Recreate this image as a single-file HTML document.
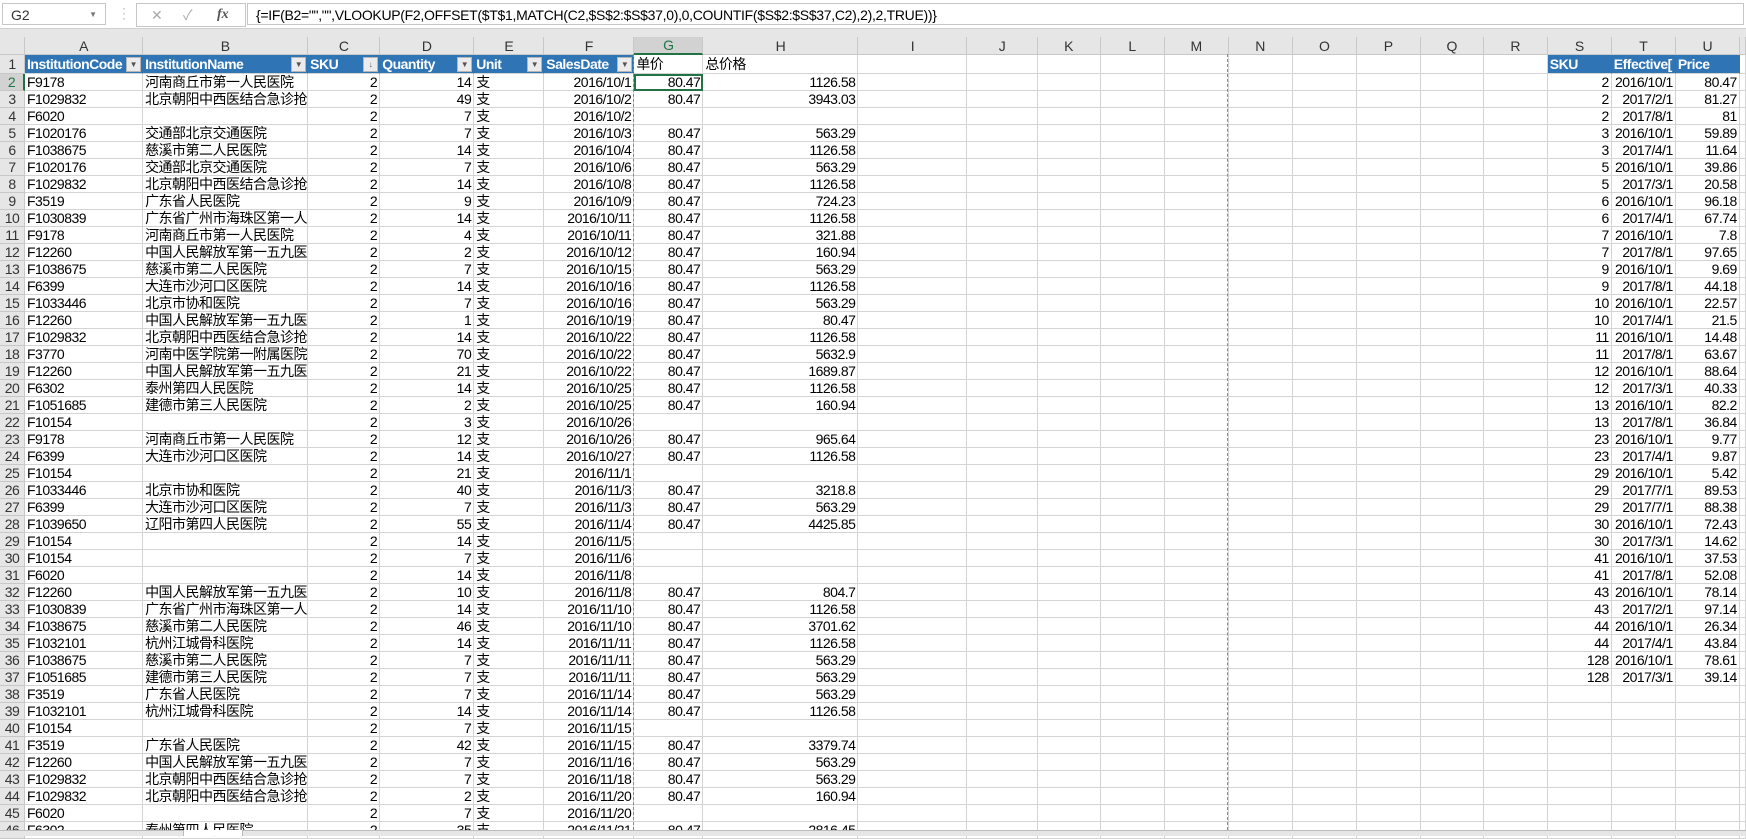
<!DOCTYPE html><html><head><meta charset="utf-8"><style>
body{margin:0;width:1746px;height:835px;overflow:hidden;background:#fff;position:relative;font-family:"Liberation Sans","Noto Sans CJK SC",sans-serif;}
#fb{position:absolute;left:0;top:0;width:1746px;height:28px;background:#fff;border-bottom:1px solid #d0d0d0;}
#gap{position:absolute;left:0;top:29px;width:1746px;height:8px;background:#e6e6e6;}
.box{position:absolute;top:3px;height:22px;border:1px solid #c6c6c6;background:#fff;font-size:14px;line-height:22px;color:#333;}
table{position:absolute;left:0;top:37px;border-collapse:separate;border-spacing:0;table-layout:fixed;width:1746px;font-size:14px;letter-spacing:-0.5px;}
td,th{padding:0 2px;height:16px;line-height:16px;border-right:1px solid #d4d4d4;border-bottom:1px solid #d4d4d4;white-space:nowrap;overflow:hidden;font-weight:normal;color:#000;box-sizing:border-box;}
th{background:#e6e6e6;color:#333;text-align:center;border-color:#c8c8c8;padding:0;}
tbody th{text-align:center;}
tr{height:17px}
tr.h{height:16px}
tr.one{height:19px}
.r{text-align:right}
.b{background:#2f75b5;color:#fff;font-weight:bold;position:relative;border-right-color:#2f75b5;}
.b i{position:absolute;right:1px;top:2px;width:15px;height:15px;background:#ececec;border:1px solid #b5b5b5;box-sizing:border-box;font-style:normal;color:#555;font-size:8px;line-height:13px;text-align:center;letter-spacing:0}
.dash{position:absolute;width:0;border-left:1px dashed #8a8a8a;top:54px;height:776px}
#tabs{position:absolute;left:0;top:830px;width:1746px;height:5px;background:#e6e6e6;border-top:1px solid #bbb}
</style></head><body>
<div id="fb">
<div class="box" style="left:2px;width:104px;padding-left:8px;box-sizing:border-box">G2<span style="position:absolute;right:8px;top:0;font-size:8px;color:#777">▼</span></div>
<div style="position:absolute;left:122px;top:6px;color:#aaa;font-size:12px;line-height:5px">·<br>·<br>·</div>
<div class="box" style="left:136px;width:108px;color:#aaa"><span style="position:absolute;left:14px">✕</span><span style="position:absolute;left:46px">✓</span><span style="position:absolute;left:80px;color:#555;font-style:italic;font-family:'Liberation Serif',serif;font-weight:bold">fx</span></div>
<div class="box" style="left:247px;width:1497px;padding-left:8px;box-sizing:border-box;color:#000;letter-spacing:-0.3px">{=IF(B2="","",VLOOKUP(F2,OFFSET($T$1,MATCH(C2,$S$2:$S$37,0),0,COUNTIF($S$2:$S$37,C2),2),2,TRUE))}</div>
</div>
<div id="gap"></div>
<table>
<colgroup><col style="width:25px"><col style="width:118px"><col style="width:165px"><col style="width:72px"><col style="width:94px"><col style="width:70px"><col style="width:90px"><col style="width:69px"><col style="width:155px"><col style="width:109px"><col style="width:70px"><col style="width:63px"><col style="width:64px"><col style="width:64px"><col style="width:64px"><col style="width:64px"><col style="width:64px"><col style="width:63px"><col style="width:64px"><col style="width:64px"><col style="width:64px"><col style="width:64px"><col style="width:6px"></colgroup>
<thead><tr class="h"><th></th><th>A</th><th>B</th><th>C</th><th>D</th><th>E</th><th>F</th><th style="background:#d2d2d2;color:#217346;border-bottom:2px solid #217346">G</th><th>H</th><th>I</th><th>J</th><th>K</th><th>L</th><th>M</th><th>N</th><th>O</th><th>P</th><th>Q</th><th>R</th><th>S</th><th>T</th><th>U</th><th></th></tr></thead>
<tbody>
<tr class="one"><th>1</th><td class="b">InstitutionCode<i>▼</i></td><td class="b">InstitutionName<i>▼</i></td><td class="b">SKU<i>↓</i></td><td class="b">Quantity<i>▼</i></td><td class="b">Unit<i>▼</i></td><td class="b">SalesDate<i>▼</i></td><td>单价</td><td>总价格</td><td></td><td></td><td></td><td></td><td></td><td></td><td></td><td></td><td></td><td></td><td class="b">SKU</td><td class="b">Effective[</td><td class="b">Price</td><td></td></tr>
<tr><th style="background:#d2d2d2;color:#217346;border-right:2px solid #217346">2</th><td>F9178</td><td>河南商丘市第一人民医院</td><td class="r">2</td><td class="r">14</td><td>支</td><td class="r">2016/10/1</td><td class="r" style="outline:2px solid #217346;outline-offset:-2px">80.47</td><td class="r">1126.58</td><td></td><td></td><td></td><td></td><td></td><td></td><td></td><td></td><td></td><td></td><td class="r">2</td><td class="r">2016/10/1</td><td class="r">80.47</td><td></td></tr>
<tr><th>3</th><td>F1029832</td><td>北京朝阳中西医结合急诊抢救</td><td class="r">2</td><td class="r">49</td><td>支</td><td class="r">2016/10/2</td><td class="r">80.47</td><td class="r">3943.03</td><td></td><td></td><td></td><td></td><td></td><td></td><td></td><td></td><td></td><td></td><td class="r">2</td><td class="r">2017/2/1</td><td class="r">81.27</td><td></td></tr>
<tr><th>4</th><td>F6020</td><td></td><td class="r">2</td><td class="r">7</td><td>支</td><td class="r">2016/10/2</td><td></td><td></td><td></td><td></td><td></td><td></td><td></td><td></td><td></td><td></td><td></td><td></td><td class="r">2</td><td class="r">2017/8/1</td><td class="r">81</td><td></td></tr>
<tr><th>5</th><td>F1020176</td><td>交通部北京交通医院</td><td class="r">2</td><td class="r">7</td><td>支</td><td class="r">2016/10/3</td><td class="r">80.47</td><td class="r">563.29</td><td></td><td></td><td></td><td></td><td></td><td></td><td></td><td></td><td></td><td></td><td class="r">3</td><td class="r">2016/10/1</td><td class="r">59.89</td><td></td></tr>
<tr><th>6</th><td>F1038675</td><td>慈溪市第二人民医院</td><td class="r">2</td><td class="r">14</td><td>支</td><td class="r">2016/10/4</td><td class="r">80.47</td><td class="r">1126.58</td><td></td><td></td><td></td><td></td><td></td><td></td><td></td><td></td><td></td><td></td><td class="r">3</td><td class="r">2017/4/1</td><td class="r">11.64</td><td></td></tr>
<tr><th>7</th><td>F1020176</td><td>交通部北京交通医院</td><td class="r">2</td><td class="r">7</td><td>支</td><td class="r">2016/10/6</td><td class="r">80.47</td><td class="r">563.29</td><td></td><td></td><td></td><td></td><td></td><td></td><td></td><td></td><td></td><td></td><td class="r">5</td><td class="r">2016/10/1</td><td class="r">39.86</td><td></td></tr>
<tr><th>8</th><td>F1029832</td><td>北京朝阳中西医结合急诊抢救</td><td class="r">2</td><td class="r">14</td><td>支</td><td class="r">2016/10/8</td><td class="r">80.47</td><td class="r">1126.58</td><td></td><td></td><td></td><td></td><td></td><td></td><td></td><td></td><td></td><td></td><td class="r">5</td><td class="r">2017/3/1</td><td class="r">20.58</td><td></td></tr>
<tr><th>9</th><td>F3519</td><td>广东省人民医院</td><td class="r">2</td><td class="r">9</td><td>支</td><td class="r">2016/10/9</td><td class="r">80.47</td><td class="r">724.23</td><td></td><td></td><td></td><td></td><td></td><td></td><td></td><td></td><td></td><td></td><td class="r">6</td><td class="r">2016/10/1</td><td class="r">96.18</td><td></td></tr>
<tr><th>10</th><td>F1030839</td><td>广东省广州市海珠区第一人民</td><td class="r">2</td><td class="r">14</td><td>支</td><td class="r">2016/10/11</td><td class="r">80.47</td><td class="r">1126.58</td><td></td><td></td><td></td><td></td><td></td><td></td><td></td><td></td><td></td><td></td><td class="r">6</td><td class="r">2017/4/1</td><td class="r">67.74</td><td></td></tr>
<tr><th>11</th><td>F9178</td><td>河南商丘市第一人民医院</td><td class="r">2</td><td class="r">4</td><td>支</td><td class="r">2016/10/11</td><td class="r">80.47</td><td class="r">321.88</td><td></td><td></td><td></td><td></td><td></td><td></td><td></td><td></td><td></td><td></td><td class="r">7</td><td class="r">2016/10/1</td><td class="r">7.8</td><td></td></tr>
<tr><th>12</th><td>F12260</td><td>中国人民解放军第一五九医院</td><td class="r">2</td><td class="r">2</td><td>支</td><td class="r">2016/10/12</td><td class="r">80.47</td><td class="r">160.94</td><td></td><td></td><td></td><td></td><td></td><td></td><td></td><td></td><td></td><td></td><td class="r">7</td><td class="r">2017/8/1</td><td class="r">97.65</td><td></td></tr>
<tr><th>13</th><td>F1038675</td><td>慈溪市第二人民医院</td><td class="r">2</td><td class="r">7</td><td>支</td><td class="r">2016/10/15</td><td class="r">80.47</td><td class="r">563.29</td><td></td><td></td><td></td><td></td><td></td><td></td><td></td><td></td><td></td><td></td><td class="r">9</td><td class="r">2016/10/1</td><td class="r">9.69</td><td></td></tr>
<tr><th>14</th><td>F6399</td><td>大连市沙河口区医院</td><td class="r">2</td><td class="r">14</td><td>支</td><td class="r">2016/10/16</td><td class="r">80.47</td><td class="r">1126.58</td><td></td><td></td><td></td><td></td><td></td><td></td><td></td><td></td><td></td><td></td><td class="r">9</td><td class="r">2017/8/1</td><td class="r">44.18</td><td></td></tr>
<tr><th>15</th><td>F1033446</td><td>北京市协和医院</td><td class="r">2</td><td class="r">7</td><td>支</td><td class="r">2016/10/16</td><td class="r">80.47</td><td class="r">563.29</td><td></td><td></td><td></td><td></td><td></td><td></td><td></td><td></td><td></td><td></td><td class="r">10</td><td class="r">2016/10/1</td><td class="r">22.57</td><td></td></tr>
<tr><th>16</th><td>F12260</td><td>中国人民解放军第一五九医院</td><td class="r">2</td><td class="r">1</td><td>支</td><td class="r">2016/10/19</td><td class="r">80.47</td><td class="r">80.47</td><td></td><td></td><td></td><td></td><td></td><td></td><td></td><td></td><td></td><td></td><td class="r">10</td><td class="r">2017/4/1</td><td class="r">21.5</td><td></td></tr>
<tr><th>17</th><td>F1029832</td><td>北京朝阳中西医结合急诊抢救</td><td class="r">2</td><td class="r">14</td><td>支</td><td class="r">2016/10/22</td><td class="r">80.47</td><td class="r">1126.58</td><td></td><td></td><td></td><td></td><td></td><td></td><td></td><td></td><td></td><td></td><td class="r">11</td><td class="r">2016/10/1</td><td class="r">14.48</td><td></td></tr>
<tr><th>18</th><td>F3770</td><td>河南中医学院第一附属医院</td><td class="r">2</td><td class="r">70</td><td>支</td><td class="r">2016/10/22</td><td class="r">80.47</td><td class="r">5632.9</td><td></td><td></td><td></td><td></td><td></td><td></td><td></td><td></td><td></td><td></td><td class="r">11</td><td class="r">2017/8/1</td><td class="r">63.67</td><td></td></tr>
<tr><th>19</th><td>F12260</td><td>中国人民解放军第一五九医院</td><td class="r">2</td><td class="r">21</td><td>支</td><td class="r">2016/10/22</td><td class="r">80.47</td><td class="r">1689.87</td><td></td><td></td><td></td><td></td><td></td><td></td><td></td><td></td><td></td><td></td><td class="r">12</td><td class="r">2016/10/1</td><td class="r">88.64</td><td></td></tr>
<tr><th>20</th><td>F6302</td><td>泰州第四人民医院</td><td class="r">2</td><td class="r">14</td><td>支</td><td class="r">2016/10/25</td><td class="r">80.47</td><td class="r">1126.58</td><td></td><td></td><td></td><td></td><td></td><td></td><td></td><td></td><td></td><td></td><td class="r">12</td><td class="r">2017/3/1</td><td class="r">40.33</td><td></td></tr>
<tr><th>21</th><td>F1051685</td><td>建德市第三人民医院</td><td class="r">2</td><td class="r">2</td><td>支</td><td class="r">2016/10/25</td><td class="r">80.47</td><td class="r">160.94</td><td></td><td></td><td></td><td></td><td></td><td></td><td></td><td></td><td></td><td></td><td class="r">13</td><td class="r">2016/10/1</td><td class="r">82.2</td><td></td></tr>
<tr><th>22</th><td>F10154</td><td></td><td class="r">2</td><td class="r">3</td><td>支</td><td class="r">2016/10/26</td><td></td><td></td><td></td><td></td><td></td><td></td><td></td><td></td><td></td><td></td><td></td><td></td><td class="r">13</td><td class="r">2017/8/1</td><td class="r">36.84</td><td></td></tr>
<tr><th>23</th><td>F9178</td><td>河南商丘市第一人民医院</td><td class="r">2</td><td class="r">12</td><td>支</td><td class="r">2016/10/26</td><td class="r">80.47</td><td class="r">965.64</td><td></td><td></td><td></td><td></td><td></td><td></td><td></td><td></td><td></td><td></td><td class="r">23</td><td class="r">2016/10/1</td><td class="r">9.77</td><td></td></tr>
<tr><th>24</th><td>F6399</td><td>大连市沙河口区医院</td><td class="r">2</td><td class="r">14</td><td>支</td><td class="r">2016/10/27</td><td class="r">80.47</td><td class="r">1126.58</td><td></td><td></td><td></td><td></td><td></td><td></td><td></td><td></td><td></td><td></td><td class="r">23</td><td class="r">2017/4/1</td><td class="r">9.87</td><td></td></tr>
<tr><th>25</th><td>F10154</td><td></td><td class="r">2</td><td class="r">21</td><td>支</td><td class="r">2016/11/1</td><td></td><td></td><td></td><td></td><td></td><td></td><td></td><td></td><td></td><td></td><td></td><td></td><td class="r">29</td><td class="r">2016/10/1</td><td class="r">5.42</td><td></td></tr>
<tr><th>26</th><td>F1033446</td><td>北京市协和医院</td><td class="r">2</td><td class="r">40</td><td>支</td><td class="r">2016/11/3</td><td class="r">80.47</td><td class="r">3218.8</td><td></td><td></td><td></td><td></td><td></td><td></td><td></td><td></td><td></td><td></td><td class="r">29</td><td class="r">2017/7/1</td><td class="r">89.53</td><td></td></tr>
<tr><th>27</th><td>F6399</td><td>大连市沙河口区医院</td><td class="r">2</td><td class="r">7</td><td>支</td><td class="r">2016/11/3</td><td class="r">80.47</td><td class="r">563.29</td><td></td><td></td><td></td><td></td><td></td><td></td><td></td><td></td><td></td><td></td><td class="r">29</td><td class="r">2017/7/1</td><td class="r">88.38</td><td></td></tr>
<tr><th>28</th><td>F1039650</td><td>辽阳市第四人民医院</td><td class="r">2</td><td class="r">55</td><td>支</td><td class="r">2016/11/4</td><td class="r">80.47</td><td class="r">4425.85</td><td></td><td></td><td></td><td></td><td></td><td></td><td></td><td></td><td></td><td></td><td class="r">30</td><td class="r">2016/10/1</td><td class="r">72.43</td><td></td></tr>
<tr><th>29</th><td>F10154</td><td></td><td class="r">2</td><td class="r">14</td><td>支</td><td class="r">2016/11/5</td><td></td><td></td><td></td><td></td><td></td><td></td><td></td><td></td><td></td><td></td><td></td><td></td><td class="r">30</td><td class="r">2017/3/1</td><td class="r">14.62</td><td></td></tr>
<tr><th>30</th><td>F10154</td><td></td><td class="r">2</td><td class="r">7</td><td>支</td><td class="r">2016/11/6</td><td></td><td></td><td></td><td></td><td></td><td></td><td></td><td></td><td></td><td></td><td></td><td></td><td class="r">41</td><td class="r">2016/10/1</td><td class="r">37.53</td><td></td></tr>
<tr><th>31</th><td>F6020</td><td></td><td class="r">2</td><td class="r">14</td><td>支</td><td class="r">2016/11/8</td><td></td><td></td><td></td><td></td><td></td><td></td><td></td><td></td><td></td><td></td><td></td><td></td><td class="r">41</td><td class="r">2017/8/1</td><td class="r">52.08</td><td></td></tr>
<tr><th>32</th><td>F12260</td><td>中国人民解放军第一五九医院</td><td class="r">2</td><td class="r">10</td><td>支</td><td class="r">2016/11/8</td><td class="r">80.47</td><td class="r">804.7</td><td></td><td></td><td></td><td></td><td></td><td></td><td></td><td></td><td></td><td></td><td class="r">43</td><td class="r">2016/10/1</td><td class="r">78.14</td><td></td></tr>
<tr><th>33</th><td>F1030839</td><td>广东省广州市海珠区第一人民</td><td class="r">2</td><td class="r">14</td><td>支</td><td class="r">2016/11/10</td><td class="r">80.47</td><td class="r">1126.58</td><td></td><td></td><td></td><td></td><td></td><td></td><td></td><td></td><td></td><td></td><td class="r">43</td><td class="r">2017/2/1</td><td class="r">97.14</td><td></td></tr>
<tr><th>34</th><td>F1038675</td><td>慈溪市第二人民医院</td><td class="r">2</td><td class="r">46</td><td>支</td><td class="r">2016/11/10</td><td class="r">80.47</td><td class="r">3701.62</td><td></td><td></td><td></td><td></td><td></td><td></td><td></td><td></td><td></td><td></td><td class="r">44</td><td class="r">2016/10/1</td><td class="r">26.34</td><td></td></tr>
<tr><th>35</th><td>F1032101</td><td>杭州江城骨科医院</td><td class="r">2</td><td class="r">14</td><td>支</td><td class="r">2016/11/11</td><td class="r">80.47</td><td class="r">1126.58</td><td></td><td></td><td></td><td></td><td></td><td></td><td></td><td></td><td></td><td></td><td class="r">44</td><td class="r">2017/4/1</td><td class="r">43.84</td><td></td></tr>
<tr><th>36</th><td>F1038675</td><td>慈溪市第二人民医院</td><td class="r">2</td><td class="r">7</td><td>支</td><td class="r">2016/11/11</td><td class="r">80.47</td><td class="r">563.29</td><td></td><td></td><td></td><td></td><td></td><td></td><td></td><td></td><td></td><td></td><td class="r">128</td><td class="r">2016/10/1</td><td class="r">78.61</td><td></td></tr>
<tr><th>37</th><td>F1051685</td><td>建德市第三人民医院</td><td class="r">2</td><td class="r">7</td><td>支</td><td class="r">2016/11/11</td><td class="r">80.47</td><td class="r">563.29</td><td></td><td></td><td></td><td></td><td></td><td></td><td></td><td></td><td></td><td></td><td class="r">128</td><td class="r">2017/3/1</td><td class="r">39.14</td><td></td></tr>
<tr><th>38</th><td>F3519</td><td>广东省人民医院</td><td class="r">2</td><td class="r">7</td><td>支</td><td class="r">2016/11/14</td><td class="r">80.47</td><td class="r">563.29</td><td></td><td></td><td></td><td></td><td></td><td></td><td></td><td></td><td></td><td></td><td></td><td></td><td></td><td></td></tr>
<tr><th>39</th><td>F1032101</td><td>杭州江城骨科医院</td><td class="r">2</td><td class="r">14</td><td>支</td><td class="r">2016/11/14</td><td class="r">80.47</td><td class="r">1126.58</td><td></td><td></td><td></td><td></td><td></td><td></td><td></td><td></td><td></td><td></td><td></td><td></td><td></td><td></td></tr>
<tr><th>40</th><td>F10154</td><td></td><td class="r">2</td><td class="r">7</td><td>支</td><td class="r">2016/11/15</td><td></td><td></td><td></td><td></td><td></td><td></td><td></td><td></td><td></td><td></td><td></td><td></td><td></td><td></td><td></td><td></td></tr>
<tr><th>41</th><td>F3519</td><td>广东省人民医院</td><td class="r">2</td><td class="r">42</td><td>支</td><td class="r">2016/11/15</td><td class="r">80.47</td><td class="r">3379.74</td><td></td><td></td><td></td><td></td><td></td><td></td><td></td><td></td><td></td><td></td><td></td><td></td><td></td><td></td></tr>
<tr><th>42</th><td>F12260</td><td>中国人民解放军第一五九医院</td><td class="r">2</td><td class="r">7</td><td>支</td><td class="r">2016/11/16</td><td class="r">80.47</td><td class="r">563.29</td><td></td><td></td><td></td><td></td><td></td><td></td><td></td><td></td><td></td><td></td><td></td><td></td><td></td><td></td></tr>
<tr><th>43</th><td>F1029832</td><td>北京朝阳中西医结合急诊抢救</td><td class="r">2</td><td class="r">7</td><td>支</td><td class="r">2016/11/18</td><td class="r">80.47</td><td class="r">563.29</td><td></td><td></td><td></td><td></td><td></td><td></td><td></td><td></td><td></td><td></td><td></td><td></td><td></td><td></td></tr>
<tr><th>44</th><td>F1029832</td><td>北京朝阳中西医结合急诊抢救</td><td class="r">2</td><td class="r">2</td><td>支</td><td class="r">2016/11/20</td><td class="r">80.47</td><td class="r">160.94</td><td></td><td></td><td></td><td></td><td></td><td></td><td></td><td></td><td></td><td></td><td></td><td></td><td></td><td></td></tr>
<tr><th>45</th><td>F6020</td><td></td><td class="r">2</td><td class="r">7</td><td>支</td><td class="r">2016/11/20</td><td></td><td></td><td></td><td></td><td></td><td></td><td></td><td></td><td></td><td></td><td></td><td></td><td></td><td></td><td></td><td></td></tr>
<tr><th>46</th><td>F6302</td><td>泰州第四人民医院</td><td class="r">2</td><td class="r">35</td><td>支</td><td class="r">2016/11/21</td><td class="r">80.47</td><td class="r">2816.45</td><td></td><td></td><td></td><td></td><td></td><td></td><td></td><td></td><td></td><td></td><td></td><td></td><td></td><td></td></tr>
</tbody></table>
<div class="dash" style="left:633px"></div>
<div class="dash" style="left:1227px"></div>
<div id="tabs"><div style="position:absolute;left:183px;top:-1px;width:58px;height:6px;background:#fff;border-left:1px solid #bbb;border-right:1px solid #bbb"></div></div>
</body></html>
